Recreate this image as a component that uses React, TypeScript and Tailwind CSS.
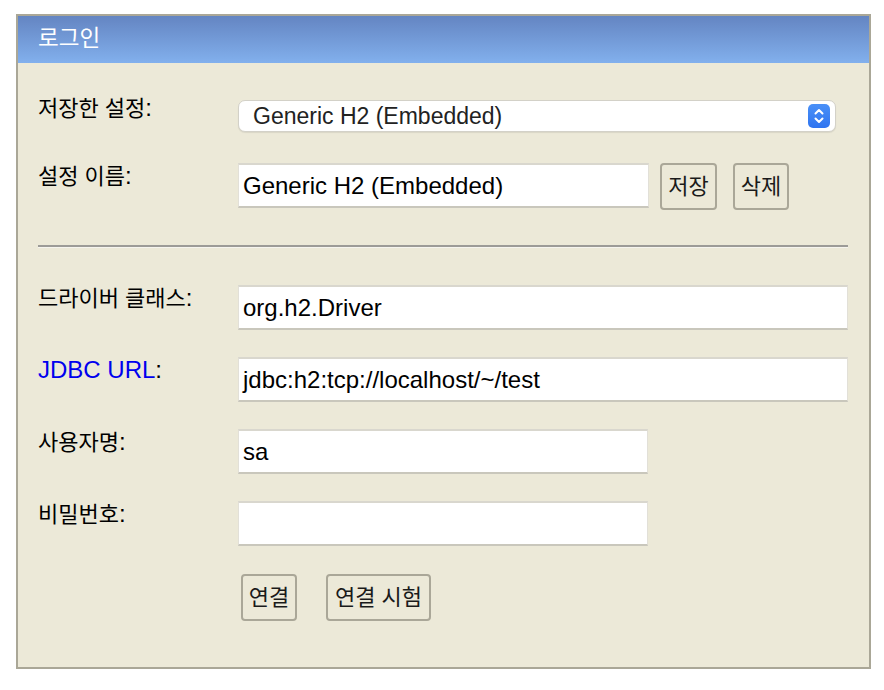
import React from "react";

const LAT = "font-['Liberation_Sans','Noto_Sans_CJK_KR',sans-serif]";

function Kr({ children }: { children: React.ReactNode }) {
  return <span className="text-[22px] font-normal">{children}</span>;
}

function TextBox({ value, w }: { value: string; w: string }) {
  return (
    <div
      className={`${w} h-[45px] bg-white border-t-[2px] border-t-[#d9d7ce] border-b-[2px] border-b-[#c9c7bc] border-l border-l-[#e2e0d8] border-r border-r-[#e2e0d8] flex items-center pl-[4px] text-[24px] text-black overflow-hidden whitespace-nowrap`}
    >
      {value}
    </div>
  );
}

function Btn({ children, w }: { children: React.ReactNode; w: string }) {
  return (
    <div
      className={`${w} h-[47px] border-2 border-[#aaa798] rounded-[4px] bg-[#ece9d8] flex items-center justify-center text-[#1a1a1a]`}
    >
      <Kr>{children}</Kr>
    </div>
  );
}

function Row({
  label,
  children,
  className = "",
}: {
  label: React.ReactNode;
  children: React.ReactNode;
  className?: string;
}) {
  return (
    <div className={`flex items-start ${className}`}>
      <div className="w-[200px] shrink-0 leading-[26px] text-[24px] text-black">{label}</div>
      {children}
    </div>
  );
}

export default function App() {
  return (
    <div className={`w-[884px] h-[690px] bg-white pt-[14px] pl-[16px] ${LAT}`}>
      <div className="w-[855px] h-[655px] border-2 border-[#aaa797] bg-[#ece9d8] flex flex-col">
        <div className="h-[47px] shrink-0 bg-gradient-to-b from-[#6485c2] to-[#82b0ed] flex items-center pl-[20px] text-white">
          <span className="text-[22.5px] leading-none">로그인</span>
        </div>
        <div className="pl-[20px] pr-[21px] flex flex-col">
          {/* saved settings */}
          <div className="flex items-start mt-[37px]">
            <div className="w-[200px] shrink-0 leading-[16px] text-[24px] text-black">
              <Kr>저장한 설정</Kr>:
            </div>
            <div className="w-[598px] h-[32px] bg-white rounded-[7px] border border-[#d3d1c8] shadow-[0_1px_1px_rgba(0,0,0,0.08)] flex items-center justify-between pl-[14px] pr-[5px]">
              <span className="text-[23px] text-[#222] whitespace-nowrap">Generic H2 (Embedded)</span>
              <div className="w-[22px] h-[24px] rounded-[5px] bg-gradient-to-b from-[#4a90f7] to-[#2f74f0] flex items-center justify-center">
                <svg width="12" height="18" viewBox="0 0 12 18" fill="none" stroke="white" strokeWidth="2" strokeLinecap="round" strokeLinejoin="round">
                  <path d="M2.5 6.5 L6 3 L9.5 6.5" />
                  <path d="M2.5 11.5 L6 15 L9.5 11.5" />
                </svg>
              </div>
            </div>
          </div>

          {/* setting name */}
          <Row label={<><Kr>설정 이름</Kr>:</>} className="mt-[31px]">
            <TextBox value="Generic H2 (Embedded)" w="w-[411px]" />
            <div className="ml-[11px]">
              <Btn w="w-[57px]">저장</Btn>
            </div>
            <div className="ml-[16px]">
              <Btn w="w-[56px]">삭제</Btn>
            </div>
          </Row>

          <div className="mt-[35px] h-[3px] border-t-2 border-t-[#9c9b97] border-b border-b-[#f5f4ee] w-[810px]" />

          <Row label={<><Kr>드라이버 클래스</Kr>:</>} className="mt-[37px]">
            <TextBox value="org.h2.Driver" w="w-[610px]" />
          </Row>

          <Row
            label={
              <>
                <span className="text-[#0000ee]">JDBC URL</span>:
              </>
            }
            className="mt-[27px]"
          >
            <TextBox value="jdbc:h2:tcp://localhost/~/test" w="w-[610px]" />
          </Row>

          <Row label={<><Kr>사용자명</Kr>:</>} className="mt-[27px]">
            <TextBox value="sa" w="w-[410px]" />
          </Row>

          <Row label={<><Kr>비밀번호</Kr>:</>} className="mt-[27px]">
            <TextBox value="" w="w-[410px]" />
          </Row>

          <div className="flex mt-[28px] pl-[203px]">
            <Btn w="w-[56px]">연결</Btn>
            <div className="ml-[29px]">
              <Btn w="w-[105px]">연결 시험</Btn>
            </div>
          </div>
        </div>
      </div>
    </div>
  );
}
